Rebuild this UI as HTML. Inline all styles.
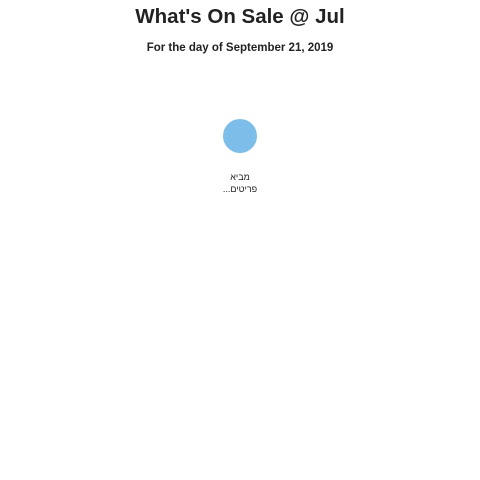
<!DOCTYPE html>
<html><head><meta charset="utf-8"><style>
html,body{margin:0;width:480px;height:480px;background:#fff;overflow:hidden;font-family:"Liberation Sans",sans-serif;color:#222}
h1{position:absolute;top:5px;left:0;width:480px;margin:0;text-align:center;font-size:20.5px;font-weight:bold}
.sub{position:absolute;top:42px;left:0;width:480px;text-align:center;font-size:11.5px;font-weight:bold}
.c{position:absolute;left:223px;top:119px;width:34px;height:34px;border-radius:50%;background:#7dbde9}
.t{position:absolute;top:171px;left:0;width:480px;text-align:center;font-size:9px;line-height:12px;font-family:"Liberation Sans","DejaVu Sans",sans-serif}
</style></head><body>
<h1>What's On Sale @ Jul</h1>
<div class="sub">For the day of September 21, 2019</div>
<div class="c"></div>
<div class="t" dir="rtl">מביא<br>פריטים...</div>
</body></html>
